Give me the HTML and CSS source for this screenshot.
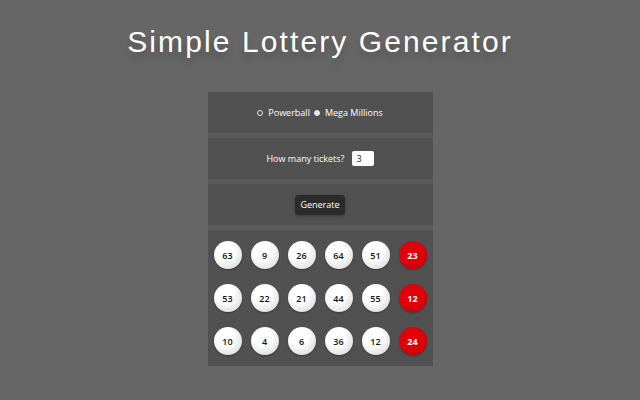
FILE: index.html
```html
<!DOCTYPE html>
<html>
  <head>
    <meta charset="UTF-8">
    <title>Simple Lottery Generator</title>
    <link rel="stylesheet" href="styles.css">
  </head>
  <body>
    <h1 class="title">Simple Lottery Generator</h1>

    <div class="panel">
      <div class="section">
        <label class="choice"><span class="dot"></span>Powerball</label>
        <label class="choice"><span class="dot filled"></span>Mega Millions</label>
      </div>

      <div class="section">
        <span class="label">How many tickets?</span>
        <span class="count">3</span>
      </div>

      <div class="section">
        <button class="generate">Generate</button>
      </div>

      <div class="section tickets">
        <div class="row">
          <span class="ball">63</span><span class="ball">9</span><span class="ball">26</span>
          <span class="ball">64</span><span class="ball">51</span><span class="ball red">23</span>
        </div>
        <div class="row">
          <span class="ball">53</span><span class="ball">22</span><span class="ball">21</span>
          <span class="ball">44</span><span class="ball">55</span><span class="ball red">12</span>
        </div>
        <div class="row">
          <span class="ball">10</span><span class="ball">4</span><span class="ball">6</span>
          <span class="ball">36</span><span class="ball">12</span><span class="ball red">24</span>
        </div>
      </div>
    </div>
  </body>
</html>
```

FILE: styles.css
```css
body {
  margin: 0;
  padding: 0;
  background-color: #666666;
  font-family: "Open Sans", "Noto Sans", sans-serif;
  color: #fff;
}

.title {
  margin: 0;
  padding-top: 25px;
  height: 69px;
  box-sizing: border-box;
  text-align: center;
  font-family: "Liberation Sans", Arial, sans-serif;
  font-weight: normal;
  font-size: 30px;
  letter-spacing: 2.1px;
  text-shadow: 0 6px 6px rgba(0, 0, 0, 0.2);
}

.panel {
  width: 225px;
  margin: 23px auto 0;
  background-color: #5b5b5b;
}

.section {
  display: flex;
  justify-content: center;
  align-items: center;
  height: 41px;
  margin-bottom: 5px;
  background-color: #515151;
  font-size: 9px;
}

.choice {
  display: flex;
  align-items: center;
  margin: 0 2px;
}

.dot {
  width: 4px;
  height: 4px;
  margin-right: 5px;
  border: 1px solid #e8e8e8;
  border-radius: 50%;
}

.dot.filled {
  background-color: #e8e8e8;
}

.label {
  margin-right: 7px;
}

.count {
  width: 22px;
  height: 15px;
  line-height: 15px;
  box-sizing: border-box;
  padding-left: 5px;
  background-color: #fff;
  color: #222;
  border-radius: 2px;
}

.generate {
  padding: 0 5px;
  height: 20px;
  background-color: #2b2b2b;
  color: #fff;
  border: none;
  border-radius: 4px;
  font-family: inherit;
  font-size: 9px;
  box-shadow: 0 1px 3px rgba(0, 0, 0, 0.3);
}

.tickets {
  height: 136px;
  margin-bottom: 0;
  flex-direction: column;
  justify-content: flex-start;
  padding-top: 11px;
  box-sizing: border-box;
}

.row {
  display: flex;
  gap: 9px;
  margin-bottom: 15px;
}

.ball {
  width: 28px;
  height: 28px;
  border-radius: 50%;
  display: flex;
  justify-content: center;
  align-items: center;
  background: radial-gradient(circle at 40% 35%, #ffffff 35%, #d0d0d0 100%);
  color: #111;
  font-size: 9px;
  font-weight: 600;
  box-shadow: 0 1px 2px rgba(0, 0, 0, 0.3);
}

.ball.red {
  background: radial-gradient(circle at 40% 35%, #e0000a 50%, #b80008 100%);
  color: #fff;
  font-weight: bold;
}
```
